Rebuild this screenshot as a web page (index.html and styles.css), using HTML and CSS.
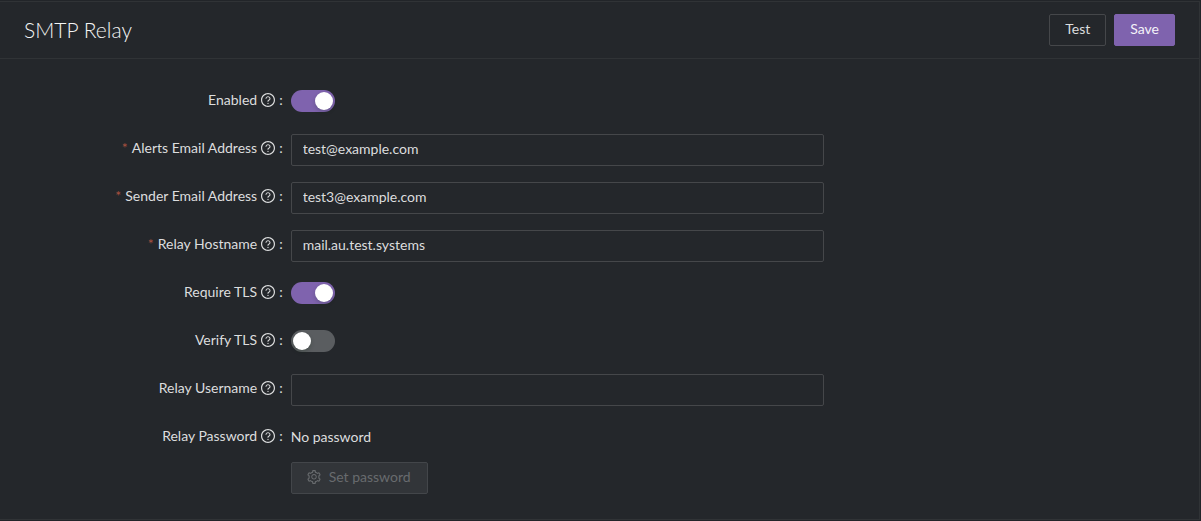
FILE: index.html
```html
<!DOCTYPE html>
<html lang="en">
<head>
<meta charset="utf-8">
<meta name="viewport" content="width=device-width, initial-scale=1">
<title>SMTP Relay</title>
<link rel="stylesheet" href="styles.css">
</head>
<body>
<svg class="sprite" aria-hidden="true">
  <symbol id="help" viewBox="64 64 896 896">
    <path d="M512 64C264.600 64 64 264.600 64 512s200.600 448 448 448 448-200.600 448-448S759.400 64 512 64zm0 820c-205.400 0-372-166.600-372-372s166.600-372 372-372 372 166.600 372 372-166.600 372-372 372z"/>
    <path d="M623.600 316.700C593.600 290.400 554 276 512 276s-81.600 14.500-111.600 40.700C369.200 344 352 380.700 352 420v7.600c0 4.400 3.600 8 8 8h48c4.400 0 8-3.600 8-8V420c0-44.100 43.100-80 96-80s96 35.900 96 80c0 31.100-22 59.600-56.100 72.700-21.200 8.100-39.200 22.300-52.100 40.900-13.100 19-19.900 41.800-19.900 64.900V620c0 4.400 3.600 8 8 8h48c4.400 0 8-3.600 8-8v-22.700a48.300 48.300 0 0 1 30.900-44.800c59-22.700 97.100-74.700 97.100-132.500.1-39.300-17.100-76-48.300-103.300zM472 732a40 40 0 1 0 80 0 40 40 0 1 0-80 0z"/>
  </symbol>
</svg>
<main class="panel">
  <header class="panel-header">
    <h1 class="title">SMTP Relay</h1>
    <div class="actions">
      <button class="btn" type="button">Test</button>
      <button class="btn btn-primary" type="submit" form="relay-form">Save</button>
    </div>
  </header>
  <form class="form" id="relay-form">
    <div class="row">
      <label class="label" for="enabled"><span>Enabled</span><svg class="icon"><use href="#help"/></svg><span class="colon">:</span></label>
      <div class="control control-switch"><input class="switch" type="checkbox" role="switch" id="enabled" checked></div>
    </div>
    <div class="row">
      <label class="label" for="alerts"><span class="required">*</span><span>Alerts Email Address</span><svg class="icon"><use href="#help"/></svg><span class="colon">:</span></label>
      <div class="control"><input class="text" type="text" id="alerts" value="test@example.com"></div>
    </div>
    <div class="row">
      <label class="label" for="sender"><span class="required">*</span><span>Sender Email Address</span><svg class="icon"><use href="#help"/></svg><span class="colon">:</span></label>
      <div class="control"><input class="text" type="text" id="sender" value="test3@example.com"></div>
    </div>
    <div class="row">
      <label class="label" for="hostname"><span class="required">*</span><span>Relay Hostname</span><svg class="icon"><use href="#help"/></svg><span class="colon">:</span></label>
      <div class="control"><input class="text" type="text" id="hostname" value="mail.au.test.systems"></div>
    </div>
    <div class="row">
      <label class="label" for="require-tls"><span>Require TLS</span><svg class="icon"><use href="#help"/></svg><span class="colon">:</span></label>
      <div class="control control-switch"><input class="switch" type="checkbox" role="switch" id="require-tls" checked></div>
    </div>
    <div class="row">
      <label class="label" for="verify-tls"><span>Verify TLS</span><svg class="icon"><use href="#help"/></svg><span class="colon">:</span></label>
      <div class="control control-switch"><input class="switch" type="checkbox" role="switch" id="verify-tls"></div>
    </div>
    <div class="row">
      <label class="label" for="username"><span>Relay Username</span><svg class="icon"><use href="#help"/></svg><span class="colon">:</span></label>
      <div class="control"><input class="text" type="text" id="username"></div>
    </div>
    <div class="row">
      <label class="label" for="password"><span>Relay Password</span><svg class="icon"><use href="#help"/></svg><span class="colon">:</span></label>
      <div class="control control-stack">
        <span class="value">No password</span>
        <button class="btn btn-disabled" type="button" id="password" disabled>
          <svg class="icon" viewBox="64 64 896 896" aria-hidden="true"><path d="M924.800 625.700l-65.500-56c3.100-19 4.700-38.400 4.700-57.800s-1.600-38.800-4.700-57.800l65.500-56a32.030 32.030 0 0 0 9.300-35.200l-.9-2.600a443.740 443.740 0 0 0-79.700-137.900l-1.800-2.100a32.120 32.120 0 0 0-35.100-9.500l-81.300 28.900c-30-24.600-63.500-44-99.700-57.600l-15.700-85a32.050 32.050 0 0 0-25.800-25.700l-2.700-.5c-52.100-9.400-106.900-9.400-159 0l-2.700.5a32.050 32.050 0 0 0-25.800 25.700l-15.800 85.400a351.860 351.860 0 0 0-99 57.400l-81.900-29.100a32 32 0 0 0-35.100 9.500l-1.800 2.100a446.020 446.020 0 0 0-79.700 137.900l-.9 2.600c-4.500 12.500-.8 26.500 9.300 35.200l66.300 56.600c-3.100 18.800-4.600 38-4.600 57.100 0 19.200 1.500 38.400 4.600 57.100L99 625.500a32.030 32.030 0 0 0-9.300 35.200l.9 2.600c18.100 50.400 44.900 96.900 79.700 137.900l1.800 2.100a32.120 32.120 0 0 0 35.100 9.500l81.900-29.100c29.800 24.500 63.100 43.900 99 57.400l15.800 85.400a32.050 32.050 0 0 0 25.800 25.700l2.700.5a449.400 449.400 0 0 0 159 0l2.700-.5a32.050 32.050 0 0 0 25.800-25.700l15.700-85a350 350 0 0 0 99.700-57.600l81.300 28.900a32 32 0 0 0 35.100-9.500l1.800-2.100c34.800-41.100 61.600-87.500 79.700-137.900l.9-2.600c4.500-12.300.8-26.300-9.300-35zM788.300 465.900c2.500 15.100 3.800 30.600 3.800 46.100s-1.300 31-3.800 46.100l-6.600 40.100 74.700 63.900a370.030 370.030 0 0 1-42.600 73.600L721 702.800l-31.400 25.800c-23.900 19.600-50.500 35-79.300 45.800l-38.100 14.300-17.900 97a377.500 377.500 0 0 1-85 0l-17.900-97.200-37.800-14.500c-28.500-10.800-55-26.200-78.700-45.700l-31.400-25.900-93.400 33.200c-17-22.900-31.200-47.600-42.600-73.600l75.500-64.500-6.500-40c-2.400-14.900-3.700-30.300-3.700-45.500 0-15.300 1.200-30.600 3.700-45.500l6.500-40-75.500-64.500c11.300-26.100 25.600-50.700 42.600-73.600l93.400 33.200 31.400-25.900c23.700-19.500 50.200-34.900 78.700-45.700l37.900-14.300 17.900-97.200c28.100-3.200 56.800-3.200 85 0l17.900 97 38.100 14.300c28.700 10.800 55.400 26.200 79.300 45.800l31.400 25.800 92.800-32.900c17 22.900 31.200 47.600 42.600 73.600L781.800 426l6.500 39.900zM512 326c-97.200 0-176 78.800-176 176s78.800 176 176 176 176-78.800 176-176-78.800-176-176-176zm79.200 255.200A111.600 111.600 0 0 1 512 614c-29.900 0-58-11.700-79.200-32.800A111.600 111.600 0 0 1 400 502c0-29.900 11.700-58 32.800-79.200C454 401.600 482.100 390 512 390c29.900 0 58 11.600 79.200 32.800A111.600 111.600 0 0 1 624 502c0 29.900-11.700 58-32.800 79.200z"/></svg>
          <span>Set password</span>
        </button>
      </div>
    </div>
  </form>
</main>
</body>
</html>
```

FILE: styles.css
```css
* {
  box-sizing: border-box;
}

body {
  margin: 0;
  padding: 1px 1px 1px 0;
  min-height: 100vh;
  display: flex;
  background: #222529;
  color: #dcddde;
  font: 14px/22px Lato, "Liberation Sans", sans-serif;
}

.sprite {
  display: none;
}

.panel {
  flex: 1;
  background: #24272b;
  border: 1px solid #303336;
  border-left: 0;
}

.panel-header {
  display: flex;
  align-items: center;
  justify-content: space-between;
  padding: 12px 24px;
  border-bottom: 1px solid #303336;
}

.title {
  margin: 0;
  font-size: 21px;
  line-height: 32px;
  font-weight: 300;
  color: #f4f5f5;
}

.actions {
  display: flex;
  gap: 8px;
}

.btn {
  display: flex;
  align-items: center;
  gap: 8px;
  height: 32px;
  padding: 0 15px 2px;
  border: 1px solid #45474a;
  border-radius: 2px;
  background: transparent;
  color: #dcddde;
  font: inherit;
}

.btn-primary {
  border-color: #7f63ae;
  background: #7f63ae;
  color: #f4f2f8;
}

.btn-disabled {
  padding: 0 16px 2px 15px;
  border-color: #43464a;
  background: #323539;
  color: #686b6e;
}

.form {
  display: flex;
  flex-direction: column;
  gap: 16px;
  max-width: 848px;
  padding: 27px 24px 24px;
}

.row {
  display: grid;
  grid-template-columns: 1fr 2fr;
  align-items: start;
  min-height: 32px;
}

.label {
  display: flex;
  align-items: center;
  justify-content: flex-end;
  height: 28px;
  padding-right: 8px;
  white-space: nowrap;
}

.label .icon {
  margin-left: 4px;
}

.required {
  margin-right: 4px;
  color: #a8503f;
}

.colon {
  margin-left: 4px;
}

.icon {
  width: 14px;
  height: 14px;
  flex: none;
  fill: currentColor;
}

.control {
  display: flex;
  align-items: center;
}

.control-switch {
  height: 30px;
}

.control-stack {
  flex-direction: column;
  align-items: flex-start;
  gap: 10px;
}

.value {
  line-height: 30px;
}

.text {
  width: 100%;
  height: 32px;
  padding: 0 11px 3px;
  border: 1px solid #45474a;
  border-radius: 2px;
  background: transparent;
  color: #dcddde;
  font: inherit;
}

.switch {
  appearance: none;
  display: flex;
  width: 44px;
  height: 22px;
  margin: 0;
  padding: 2px;
  border-radius: 11px;
  background: #5a5d60;
}

.switch::before {
  content: "";
  width: 18px;
  height: 18px;
  border-radius: 50%;
  background: #fff;
  box-shadow: 0 2px 4px rgba(0, 35, 11, 0.2);
}

.switch:checked {
  justify-content: flex-end;
  background: #7f63ae;
}
```
